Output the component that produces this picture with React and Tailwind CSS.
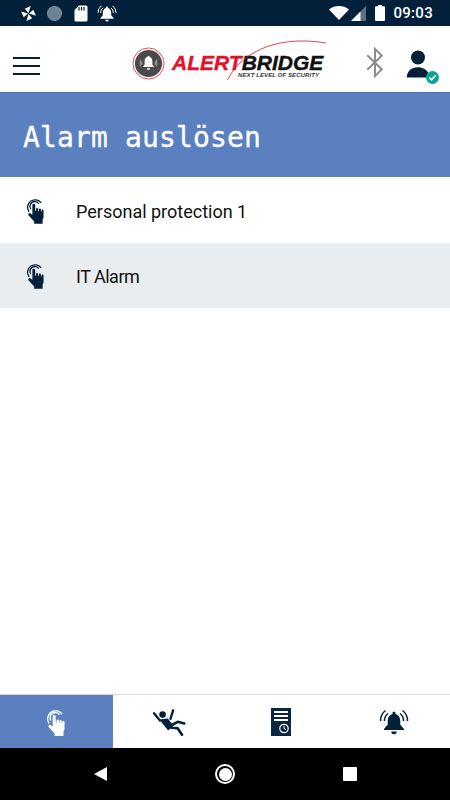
import React from 'react';

const HandIcon = ({ className }) => (
  <svg viewBox="0 0 20 28" className={className} fill="currentColor">
    <path d="M3.200 15.500A7.600 7.600 0 1 1 16 6" fill="none" stroke="currentColor" strokeWidth="1.400" />
    <path d="M5 12.500A5 5 0 1 1 13.400 6.800" fill="none" stroke="currentColor" strokeWidth="1.400" />
    <path d="M6.700 8.300a1.500 1.500 0 0 1 3 0v6l.9.100v-1.900a1.100 1.100 0 0 1 2.200 0v2.200l.7.100v-1.700a1.100 1.100 0 0 1 2.200 0v2l.6.200v-1.300a1.100 1.100 0 0 1 2.200 0v6.200c0 1.500-.4 2.400-1 3.400V28H8.600v-2.500L2.800 19.300a1.500 1.500 0 0 1 2.200-2.100l1.700 1.600z" />
  </svg>
);

const BellIcon = ({ className }) => (
  <svg viewBox="0 0 30 28" className={className} fill="currentColor">
    <path d="M15 3.500a1.500 1.500 0 0 1 1.500 1.500v.9c3.700 1.200 4.800 4.300 4.800 7.600v3.300l3.700 4.200v1H5v-1l3.700-4.200v-3.300c0-3.300 1.100-6.400 4.800-7.600V5A1.500 1.500 0 0 1 15 3.500z" />
    <path d="M12.300 23.500h5.400a2.700 2.700 0 0 1-5.400 0z" />
    <path d="M5.500 13A9 9 0 0 1 9 5.500M1.500 13A13 13 0 0 1 6.500 2.500M24.500 13A9 9 0 0 0 21 5.500M28.500 13a13 13 0 0 0-5-10.500" fill="none" stroke="currentColor" strokeWidth="1.500" />
  </svg>
);

const FallIcon = ({ className }) => (
  <svg viewBox="450 50 110 85" className={className} fill="currentColor">
    <circle cx="487" cy="70" r="10" />
    <path d="M461 66l18 22M519 57l-8 26" fill="none" stroke="currentColor" strokeWidth="7" strokeLinecap="round" />
    <path d="M477 85l26-3 17 22-16 14z" />
    <path d="M512 103l21-11 20 5M514 110l18 1 14 20" fill="none" stroke="currentColor" strokeWidth="8" strokeLinecap="round" strokeLinejoin="round" />
  </svg>
);

const LogIcon = ({ className }) => (
  <svg viewBox="0 0 20 28" className={className}>
    <rect width="20" height="28" fill="#0a2540" />
    <path d="M3 4h14M3 8h14M3 12h14" stroke="#fff" strokeWidth="1.800" />
    <circle cx="13" cy="20.500" r="4.200" fill="none" stroke="#fff" strokeWidth="1.200" />
    <path d="M13 18v2.500l1.800 1" fill="none" stroke="#fff" strokeWidth="1" />
  </svg>
);

const Logo = () => (
  <div className="relative flex items-center gap-[7px]">
    <svg viewBox="0 0 34 34" className="w-[33px] h-[33px] shrink-0">
      <circle cx="17" cy="17" r="16" fill="#fff" stroke="#e2122a" strokeWidth="0.800" />
      <circle cx="17" cy="17" r="14" fill="#4a4a4a" />
      <path d="M17 9a1 1 0 0 1 1 1c2.500.7 3 2.800 3 5v3l2 2.500H11L13 18v-3c0-2.200.5-4.300 3-5a1 1 0 0 1 1-1z" fill="#fff" />
      <path d="M15.300 22h3.400a1.700 1.700 0 0 1-3.400 0z" fill="#fff" />
      <path d="M8.500 13v7M10 14.500v4M25.500 13v7M24 14.500v4" stroke="#bbb" strokeWidth="0.800" />
    </svg>
    <div className="flex flex-col items-start mt-[4px] [font-family:'Liberation_Sans',sans-serif]">
      <div className="italic font-bold text-[21px] leading-[19px] [-webkit-text-stroke:0.4px] whitespace-nowrap">
        <span className="text-[#e2122a]">ALERT</span>
        <span className="text-[#111]">BRIDGE</span>
      </div>
      <div className="italic font-bold ml-[66px] text-[6px] leading-[6px] tracking-[0.1px] text-[#333] whitespace-nowrap">
        NEXT LEVEL OF SECURITY
      </div>
    </div>
    <svg viewBox="0 0 100 44" className="absolute left-[95px] -top-[9px] w-[100px] h-[44px]" fill="none">
      <path d="M0.500 42C12 18 45 -4 99 5" stroke="#e2122a" strokeWidth="0.800" />
    </svg>
  </div>
);

export default function App() {
  return (
    <div className="w-[450px] h-[800px] flex flex-col bg-white overflow-hidden [font-family:Roboto,sans-serif]">
      {/* status bar */}
      <div className="h-[26px] bg-[#03203a] flex items-center pl-[20px] pr-[17px] text-white">
        <svg viewBox="0 0 16 16" className="w-[17px] h-[17px]" fill="#fff">
          <path d="M8 7.500L10 1L4.500 3.500z" />
          <path d="M8 7.500L10 1L4.500 3.500z" transform="rotate(90 8 8)" />
          <path d="M8 7.500L10 1L4.500 3.500z" transform="rotate(180 8 8)" />
          <path d="M8 7.500L10 1L4.500 3.500z" transform="rotate(270 8 8)" />
        </svg>
        <div className="ml-[10px] w-[15px] h-[15px] rounded-full bg-[#6b7f95] border border-dotted border-[#9aa8b6]" />
        <svg viewBox="0 0 14 17" className="ml-[12px] w-[14px] h-[17px]" fill="#fff">
          <path d="M5 .5h7a1.500 1.500 0 0 1 1.500 1.500v13a1.500 1.500 0 0 1-1.500 1.500H2A1.500 1.500 0 0 1 .5 15V5z" />
          <path d="M5 2v3.500M7.500 2v3.500M10 2v3.500" stroke="#03203a" strokeWidth="1.200" />
        </svg>
        <BellIcon className="ml-[9px] w-[20px] h-[19px]" />
        <svg viewBox="0 0 20 14" className="ml-auto w-[20px] h-[14px]" fill="#fff">
          <path d="M10 14L0 3.500C5.500-1.100 14.500-1.100 20 3.500z" />
        </svg>
        <svg viewBox="0 0 15 15" className="ml-[2px] w-[15px] h-[15px]">
          <path d="M15 0v15H0z" fill="#5e7183" />
          <path d="M9.500 5.500V15H0z" fill="#fff" />
        </svg>
        <svg viewBox="0 0 10 16" className="ml-[9px] w-[10px] h-[16px]" fill="#fff">
          <path d="M3.200 0h3.600v1.300H9a1 1 0 0 1 1 1V15a1 1 0 0 1-1 1H1a1 1 0 0 1-1-1V2.300a1 1 0 0 1 1-1h2.200z" />
        </svg>
        <span className="ml-[8px] text-[15px] font-medium tracking-[0.3px]">09:03</span>
      </div>

      {/* header */}
      <div className="h-[66px] flex items-center pl-[13px] pr-[20px]">
        <div className="flex flex-col gap-[6px] w-[27px] mt-[14px]">
          <div className="h-[2px] bg-[#03203a]" />
          <div className="h-[2px] bg-[#03203a]" />
          <div className="h-[2px] bg-[#03203a]" />
        </div>
        <div className="ml-[92px] mt-[8px]">
          <Logo />
        </div>
        <svg viewBox="0 0 18 32" className="ml-auto w-[18px] h-[31px] mt-[7px]" fill="none" stroke="#8a8a8a" strokeWidth="2">
          <path d="M1 8.500l15 14.500-7 7V2l7 7L1 23.500" />
        </svg>
        <div className="relative ml-[22px] mt-[10px] w-[24px] h-[28px]">
          <svg viewBox="0 0 24 30" className="w-[24px] h-[28px]" fill="#03203a">
            <circle cx="12" cy="8" r="7.500" />
            <path d="M0 29.500c0-7 5-11 12-11 5 0 9 2.500 11 6l-2 5z" />
          </svg>
          <div className="absolute -right-[9px] -bottom-[6px] w-[13px] h-[13px] rounded-full bg-[#0aa596] flex items-center justify-center">
            <svg viewBox="0 0 10 10" className="w-[9px] h-[9px]" fill="none" stroke="#fff" strokeWidth="1.800">
              <path d="M1.500 5l2.500 2.500 4.500-5" />
            </svg>
          </div>
        </div>
      </div>

      {/* title */}
      <div className="h-[85px] bg-[#5a80c0] border-t border-[#4a70ac] flex items-center pl-[23px] pt-[5px]">
        <h1 className="text-white text-[28px] tracking-[0.15px] [-webkit-text-stroke:0.3px] [font-family:'DejaVu_Sans_Mono',monospace]">Alarm auslösen</h1>
      </div>

      {/* alarms */}
      <div className="flex-1">
        <div className="h-[66px] flex items-center pl-[26px]">
          <HandIcon className="w-[19px] h-[27px] text-[#03203a]" />
          <span className="ml-[31px] pt-[2px] text-[18px] text-[#111]">Personal protection 1</span>
        </div>
        <div className="h-[65px] flex items-center pl-[26px] bg-[#e9edf0]">
          <HandIcon className="w-[19px] h-[27px] text-[#03203a]" />
          <span className="ml-[31px] pt-[2px] text-[18px] tracking-[-0.5px] text-[#111]">IT Alarm</span>
        </div>
      </div>

      {/* tabs */}
      <div className="h-[54px] grid grid-cols-4 border-t border-[#dcdcdc]">
        <div className="bg-[#5a80c0] flex items-center justify-center">
          <HandIcon className="w-[20px] h-[28px] text-white" />
        </div>
        <div className="flex items-center justify-center">
          <FallIcon className="w-[37px] h-[28px] text-[#03203a]" />
        </div>
        <div className="flex items-center justify-center">
          <LogIcon className="w-[20px] h-[28px]" />
        </div>
        <div className="flex items-center justify-center">
          <BellIcon className="w-[30px] h-[28px] text-[#03203a]" />
        </div>
      </div>

      {/* android nav */}
      <div className="h-[52px] bg-black flex items-center justify-center">
        <div className="grid grid-cols-3 items-center w-[375px]">
          <div className="flex justify-center">
            <div className="w-0 h-0 border-y-[7.500px] border-y-transparent border-r-[13px] border-r-white" />
          </div>
          <div className="flex justify-center">
            <div className="w-[20px] h-[20px] rounded-full border-2 border-white flex items-center justify-center">
              <div className="w-[13px] h-[13px] rounded-full bg-white" />
            </div>
          </div>
          <div className="flex justify-center items-center">
            <div className="w-[14px] h-[14px] bg-white rounded-[1px]" />
          </div>
        </div>
      </div>
    </div>
  );
}
